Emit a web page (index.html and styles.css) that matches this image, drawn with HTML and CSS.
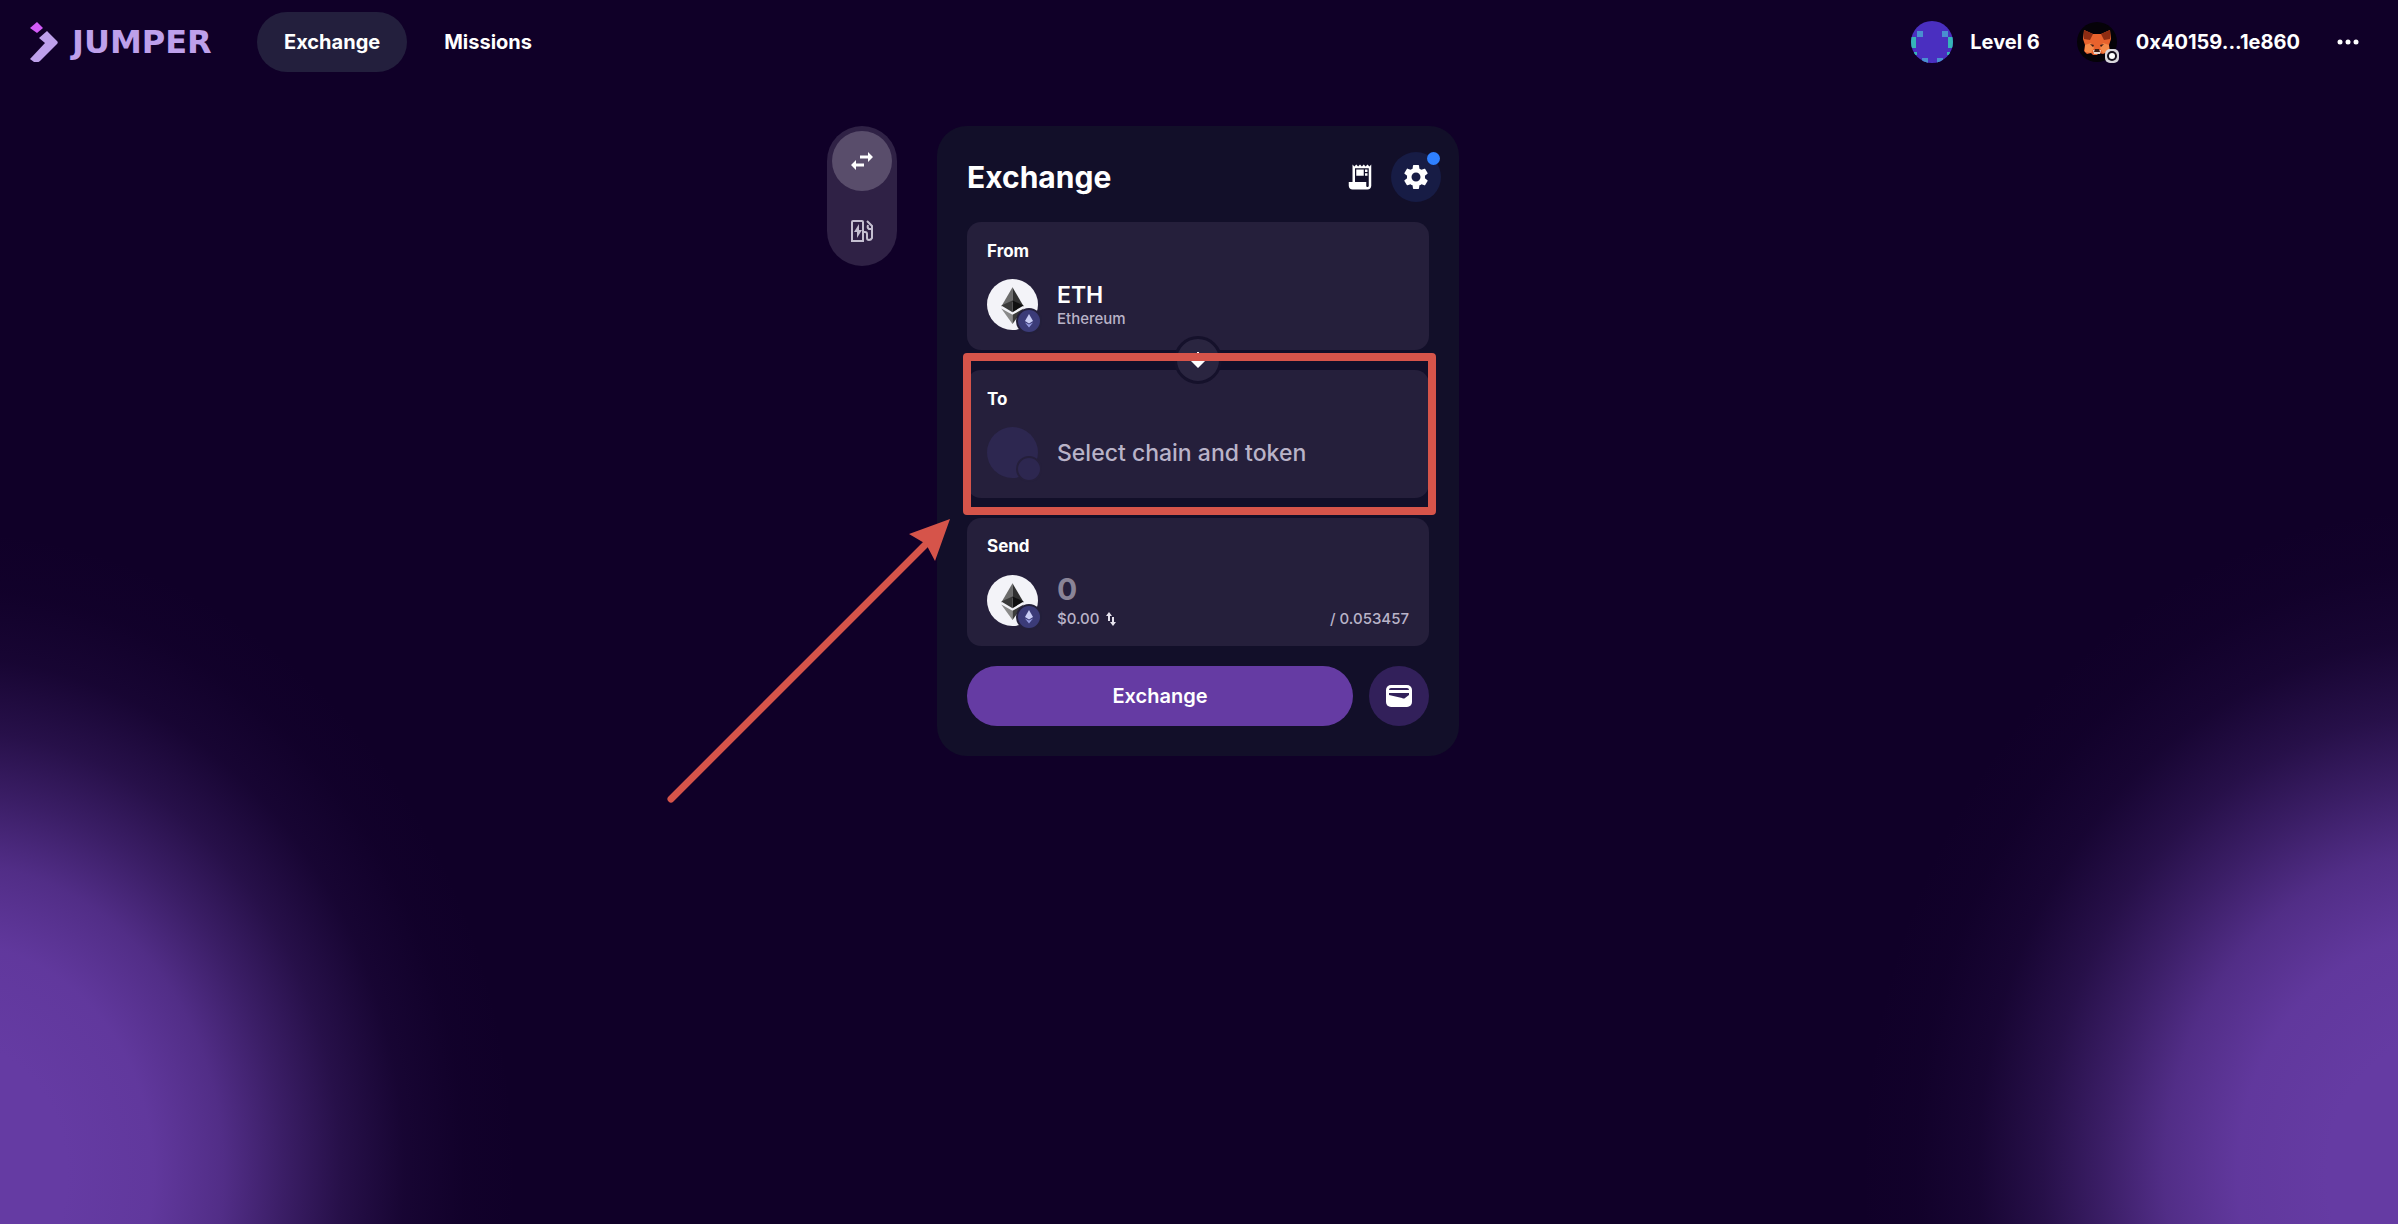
FILE: index.html
```html
<!DOCTYPE html>
<html lang="en">
<head>
    <meta charset="UTF-8">
    <meta name="viewport" content="width=device-width, initial-scale=1.0">
    <title>Jumper - Exchange</title>
    <link rel="stylesheet" href="styles.css">
</head>
<body>
    <!-- shared shapes -->
    <svg width="0" height="0" class="sprite" aria-hidden="true">
        <symbol id="eth" viewBox="0 0 50 50">
            <circle cx="25" cy="25" r="25" fill="#f3f3f8"/>
            <path d="M25 8v14.500L14 27z" fill="#6b6b6b"/>
            <path d="M25 8v14.500L36 27z" fill="#303030"/>
            <path d="M14 26l11-5v11.500z" fill="#3a3a3a"/>
            <path d="M36 26l-11-5v11.500z" fill="#101010"/>
            <path d="M14 29l11 6v9z" fill="#8a8a8a"/>
            <path d="M36 29l-11 6v9z" fill="#3c3c3b"/>
        </symbol>
        <symbol id="eth-chain" viewBox="0 0 26 26">
            <circle cx="13" cy="13" r="13" fill="#231f3a"/>
            <circle cx="13" cy="13" r="11" fill="#3b3b78"/>
            <path d="M13 6l-4 7 4 2.500 4-2.500z" fill="#c9cdf5"/>
            <path d="M9 14.500l4 5 4-5-4 2z" fill="#969ce0"/>
        </symbol>
    </svg>

    <header class="navbar">
        <a href="#" class="logo">
            <svg width="28" height="40" viewBox="0 0 28 40" aria-hidden="true">
                <path d="M7 0l6 6-6 5-7-5z" fill="#d35cf8"/>
                <path d="M17 9l10 10c1 1 1 2 0 3L10 39c-1 1-2 1-3 1H4l-4-3 15-16-6-5z" fill="#bea0eb"/>
            </svg>
            <span>JUMPER</span>
        </a>
        <nav class="nav-links">
            <a href="#" class="active">Exchange</a>
            <a href="#">Missions</a>
        </nav>
        <div class="account">
            <a href="#" class="account-item">
                <svg width="42" height="42" viewBox="0 0 42 42" aria-hidden="true">
                    <clipPath id="round"><circle cx="21" cy="21" r="21"/></clipPath>
                    <g clip-path="url(#round)">
                        <path fill="#4a2fc0" d="M0 0h42v42H0z"/>
                        <path fill="#4a8fd0" d="M6 10h6v6H6zM31 10h6v6h-6zM11 37h6v5h-6zM26 37h6v5h-6z"/>
                        <path fill="#35b5b8" d="M0 16h5v11H0zM37 16h5v11h-5zM3 31h3v3H3zM36 31h3v3h-3z"/>
                    </g>
                </svg>
                <span>Level 6</span>
            </a>
            <button type="button" class="account-item">
                <svg width="42" height="42" viewBox="0 0 42 42" aria-hidden="true">
                    <circle cx="20" cy="21" r="20" fill="#050208"/>
                    <path d="M7 9l9 4h8l9-4 1 9-2 6 1 6-7 3-4-1-2 2h-4l-2-2-4 1-3-3 1-6-2-6z" fill="#e8622d"/>
                    <path d="M7 9l9 4-3 6-6-1z" fill="#8e2c12"/>
                    <path d="M33 9l-9 4 3 6 6-1z" fill="#8e2c12"/>
                    <path d="M8 24l6-2 3 5-3 5-6-1zM32 24l-6-2-3 5 3 5 6-1z" fill="#f58a4a"/>
                    <path d="M13 23l4 1-1 2zM27 23l-4 1 1 2z" fill="#3c1c14"/>
                    <path d="M16 29h8l-1 4h-6z" fill="#e8d6cc"/>
                    <path d="M18 28h4l1 3h-6z" fill="#3c1c14"/>
                    <rect x="28" y="28" width="14" height="14" rx="5" fill="#d8d6dc"/>
                    <circle cx="35" cy="35" r="5" fill="#15101c"/>
                    <circle cx="35" cy="35" r="3" fill="#ffffff"/>
                </svg>
                <span>0x40159...1e860</span>
            </button>
            <button type="button" class="more" aria-label="Menu">
                <svg width="22" height="6" viewBox="0 0 22 6" fill="currentColor" aria-hidden="true">
                    <circle cx="3" cy="3" r="2.500"/><circle cx="11" cy="3" r="2.500"/><circle cx="19" cy="3" r="2.500"/>
                </svg>
            </button>
        </div>
    </header>

    <main class="content">
        <div class="tabs">
            <button type="button" class="tab active" aria-label="Exchange">
                <svg width="24" height="24" viewBox="0 0 24 24" fill="currentColor" aria-hidden="true">
                    <path d="M23 8l-5-5v3.500h-8v3h8V13zM1 16l5 5v-3.500h8v-3H6V11z"/>
                </svg>
            </button>
            <button type="button" class="tab" aria-label="Gas">
                <svg width="24" height="24" viewBox="0 0 24 24" fill="none" stroke="currentColor" stroke-width="2" aria-hidden="true">
                    <path d="M2 22V3q0-1 1-1h9q1 0 1 1v19zM13 13h2q2 0 2 2v4q0 2 2 2t3-2V7l-5-5M22 10h-3q-2-1-1-4"/>
                    <path d="M9 5l-5 8h3v6l5-8H9z" fill="currentColor" stroke="none"/>
                </svg>
            </button>
        </div>

        <section class="widget">
            <div class="widget-header">
                <h1>Exchange</h1>
                <button type="button" class="icon-button" aria-label="Transaction history">
                    <svg width="30" height="30" viewBox="0 0 24 24" fill="currentColor" aria-hidden="true">
                        <path d="M19.500 3.500 18 2l-1.500 1.500L15 2l-1.500 1.500L12 2l-1.500 1.500L9 2 7.500 3.500 6 2v14H3v3c0 1.660 1.340 3 3 3h12c1.660 0 3-1.340 3-3V2zM19 19c0 .550-.450 1-1 1s-1-.450-1-1v-3H8V5h11z"/>
                        <path d="M9 6h6v5H9zM16 6h2v2h-2zM16 9h2v2h-2z"/>
                    </svg>
                </button>
                <button type="button" class="icon-button settings" aria-label="Settings">
                    <svg width="30" height="30" viewBox="0 0 24 24" fill="currentColor" aria-hidden="true">
                        <path d="M19.140 12.940c.040-.300.060-.610.060-.940 0-.320-.020-.640-.070-.940l2.030-1.580c.180-.140.230-.410.120-.610l-1.920-3.320c-.120-.220-.370-.290-.590-.220l-2.390.960c-.500-.380-1.030-.700-1.620-.940l-.360-2.540c-.040-.240-.240-.410-.480-.410h-3.840c-.240 0-.430.170-.470.410l-.360 2.540c-.590.240-1.130.570-1.620.940l-2.390-.960c-.220-.080-.470 0-.590.220L2.740 8.870c-.120.210-.080.470.120.610l2.030 1.580c-.050.300-.090.630-.090.940s.020.640.070.940l-2.030 1.580c-.180.140-.230.410-.120.610l1.920 3.320c.120.220.370.290.590.220l2.390-.960c.500.380 1.030.700 1.620.940l.360 2.540c.050.240.240.410.480.410h3.840c.240 0 .440-.170.470-.410l.360-2.540c.590-.240 1.130-.560 1.620-.940l2.390.960c.220.080.470 0 .590-.220l1.920-3.320c.120-.220.070-.470-.120-.610zM12 15.600c-1.980 0-3.600-1.620-3.600-3.600s1.620-3.600 3.600-3.600 3.600 1.620 3.600 3.600-1.620 3.600-3.600 3.600"/>
                    </svg>
                    <span class="dot"></span>
                </button>
            </div>

            <form class="widget-form">
                <button type="button" class="field">
                    <span class="field-label">From</span>
                    <span class="field-row">
                        <span class="token">
                            <svg class="token-icon"><use href="#eth"/></svg>
                            <svg class="chain-icon"><use href="#eth-chain"/></svg>
                        </span>
                        <span class="field-text">
                            <span class="token-name">ETH</span>
                            <span class="small">Ethereum</span>
                        </span>
                    </span>
                </button>

                <div class="field-wrap">
                    <button type="button" class="field">
                        <span class="field-label">To</span>
                        <span class="field-row">
                            <span class="token empty">
                                <span class="token-icon"></span>
                                <span class="chain-icon"></span>
                            </span>
                            <span class="placeholder">Select chain and token</span>
                        </span>
                    </button>
                    <button type="button" class="swap" aria-label="Reverse tokens">
                        <svg width="24" height="24" viewBox="0 0 24 24" fill="currentColor" aria-hidden="true">
                            <path d="M11 4h2v7h8l-9 9-9-9h8z"/>
                        </svg>
                    </button>
                    <div class="highlight"></div>
                    <svg class="arrow" width="290" height="290" viewBox="0 0 290 290" aria-hidden="true">
                        <path d="M8 285L264 29" stroke="#d6544a" stroke-width="7" stroke-linecap="round"/>
                        <path d="M246 20l41-15-15 42-9-17z" fill="#d6544a"/>
                    </svg>
                </div>

                <div class="field">
                    <label class="field-label" for="amount">Send</label>
                    <div class="field-row">
                        <span class="token">
                            <svg class="token-icon"><use href="#eth"/></svg>
                            <svg class="chain-icon"><use href="#eth-chain"/></svg>
                        </span>
                        <div class="field-text amount">
                            <input type="text" id="amount" inputmode="decimal" placeholder="0">
                            <div class="small amount-info">
                                <span>$0.00</span>
                                <svg width="10" height="14" viewBox="0 0 10 14" fill="#e6e3ee" aria-hidden="true">
                                    <path d="M3 0l3 4H4v5H2V4H0zM7 14l3-4H8V5H6v5H4z"/>
                                </svg>
                                <span class="balance">/ 0.053457</span>
                            </div>
                        </div>
                    </div>
                </div>

                <div class="actions">
                    <button type="submit" class="submit">Exchange</button>
                    <button type="button" class="wallet" aria-label="Send to wallet">
                        <svg width="26" height="22" viewBox="0 0 26 22" aria-hidden="true">
                            <rect width="26" height="22" rx="5" fill="#ffffff"/>
                            <path d="M3 5q0-2 2-2h16q2 0 2 2z" fill="#32205a"/>
                            <path d="M3 8h20v2l-4 3q-1 1-3 0L3 10z" fill="#32205a"/>
                        </svg>
                    </button>
                </div>
            </form>
        </section>
    </main>
</body>
</html>
```
FILE: styles.css
```css
:root {
    --bg: #100028;
    --glow: 101, 59, 163;
    --primary: #653ba3;
    --widget: #120f29;
    --card: #251f3b;
    --text: #ffffff;
    --muted: #b9b3c8;
    --mark: #d6544a;
    --glow-stops: rgb(var(--glow)) 35%, rgba(var(--glow), 0.95) 61%, rgba(var(--glow), 0.77) 82%, rgba(var(--glow), 0.5) 100%, rgba(var(--glow), 0.27) 117%, rgba(var(--glow), 0.09) 136%, rgba(var(--glow), 0.02) 154%, rgba(var(--glow), 0) 170%;
}

* {
    box-sizing: border-box;
}

body {
    font-family: Inter, "Liberation Sans", sans-serif;
    color: var(--text);
    margin: 0;
    min-height: 100vh;
    background-color: var(--bg);
    background-image:
        radial-gradient(ellipse 334px 380px at -50px calc(100% - 50px), var(--glow-stops)),
        radial-gradient(ellipse 346px 394px at calc(100% + 50px) calc(100% - 50px), var(--glow-stops));
    overflow-x: hidden;
}

a {
    color: inherit;
    text-decoration: none;
}

button {
    font: inherit;
    color: inherit;
    background: none;
    border: none;
    padding: 0;
    cursor: pointer;
}

svg {
    display: block;
}

.sprite {
    position: absolute;
}

/* Navbar */
.navbar {
    display: flex;
    align-items: center;
    height: 84px;
    padding: 0 32px 0 30px;
    font-size: 20px;
    font-weight: 700;
}

.logo {
    display: flex;
    align-items: center;
    gap: 14px;
    width: 227px;
    color: #bea0eb;
    font-family: "DejaVu Sans", sans-serif;
    font-size: 32px;
}

.nav-links {
    display: flex;
    gap: 10px;
}

.nav-links a {
    height: 60px;
    line-height: 60px;
    padding: 0 27px;
    border-radius: 30px;
}

.nav-links .active {
    background-color: #231f3d;
}

.account {
    display: flex;
    align-items: center;
    gap: 37px;
    margin-left: auto;
}

.account-item {
    display: flex;
    align-items: center;
    gap: 17px;
}

.more {
    padding: 10px 7px 10px 0;
}

/* Exchange widget */
.content {
    display: grid;
    grid-template-columns: 1fr 522px 1fr;
    column-gap: 40px;
    align-items: start;
    padding: 42px 2px 42px 0;
}

.tabs {
    justify-self: end;
    display: flex;
    flex-direction: column;
    gap: 10px;
    padding: 5px;
    border-radius: 35px;
    background-color: #2f2145;
}

.tab {
    display: grid;
    place-items: center;
    width: 60px;
    height: 60px;
    border-radius: 50%;
    color: #c4bfd0;
}

.tab.active {
    background-color: #594d6b;
    color: var(--text);
}

.widget {
    background-color: var(--widget);
    padding: 26px 30px 30px;
    border-radius: 30px;
}

.widget-header {
    display: flex;
    align-items: center;
    gap: 6px;
    margin: 0 -12px 20px 0;
}

h1 {
    flex: 1;
    margin: 0;
    font-size: 30px;
    font-weight: 700;
    line-height: 48px;
}

.icon-button {
    display: grid;
    place-items: center;
    width: 50px;
    height: 50px;
    border-radius: 50%;
}

.settings {
    position: relative;
    background-color: #171c45;
}

.dot {
    position: absolute;
    top: 0;
    right: 1px;
    width: 13px;
    height: 13px;
    border-radius: 50%;
    background-color: #2f80ff;
}

.widget-form {
    display: flex;
    flex-direction: column;
    gap: 20px;
}

.field {
    display: block;
    width: 100%;
    height: 128px;
    padding: 20px;
    border-radius: 14px;
    background-color: var(--card);
    text-align: left;
}

.field-label {
    display: block;
    margin-bottom: 20px;
    font-size: 17px;
    font-weight: 700;
    line-height: 17px;
}

.field-row {
    display: flex;
    align-items: center;
    gap: 19px;
    height: 50px;
}

.token {
    position: relative;
}

.token-icon {
    display: block;
    width: 51px;
    height: 51px;
}

.chain-icon {
    position: absolute;
    right: -4px;
    bottom: -4px;
    width: 26px;
    height: 26px;
}

.empty span {
    border-radius: 50%;
    background-color: #2d2750;
}

.empty .chain-icon {
    border: 2px solid var(--card);
}

.field-text {
    flex: 1;
    display: flex;
    flex-direction: column;
}

.token-name {
    font-size: 23px;
    font-weight: 600;
    line-height: 28px;
}

.small {
    color: var(--muted);
    font-size: 15px;
    font-weight: 500;
    line-height: 20px;
}

.placeholder {
    color: var(--muted);
    font-size: 23px;
    font-weight: 500;
}

.field-wrap {
    position: relative;
}

.swap {
    position: absolute;
    top: -34px;
    left: calc(50% - 24px);
    display: grid;
    place-items: center;
    width: 48px;
    height: 48px;
    border: 3px solid #15112b;
    border-radius: 50%;
    background-color: #2a2540;
}

/* Tutorial marks */
.highlight {
    position: absolute;
    top: -17px;
    left: -4px;
    right: -7px;
    bottom: -17px;
    border: 8px solid var(--mark);
    border-radius: 4px;
    pointer-events: none;
}

.arrow {
    position: absolute;
    top: 144px;
    left: -304px;
    pointer-events: none;
}

.amount {
    gap: 4px;
    padding-top: 2px;
}

.amount input {
    width: 100%;
    height: 32px;
    padding: 0;
    border: none;
    outline: none;
    background: none;
    color: var(--text);
    font: 700 30px/32px Inter, sans-serif;
}

.amount input::placeholder {
    color: #8a8497;
    opacity: 1;
}

.amount-info {
    display: flex;
    align-items: center;
    gap: 7px;
}

.balance {
    margin-left: auto;
}

.actions {
    display: flex;
    gap: 16px;
}

.submit {
    flex: 1;
    height: 60px;
    border-radius: 30px;
    background-color: var(--primary);
    font-size: 20px;
    font-weight: 600;
}

.wallet {
    display: grid;
    place-items: center;
    width: 60px;
    height: 60px;
    border-radius: 50%;
    background-color: #32205a;
}
```
